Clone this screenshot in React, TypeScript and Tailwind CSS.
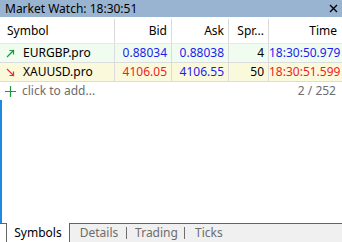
import React from "react";

// one quote row in the market watch table
type Quote = {
  symbol: string;
  up: boolean;
  bid: string;
  ask: string;
  spread: string;
  time: string;
};

const quotes: Quote[] = [
  { symbol: "EURGBP.pro", up: true, bid: "0.88034", ask: "0.88038", spread: "4", time: "18:30:50.979" },
  { symbol: "XAUUSD.pro", up: false, bid: "4106.05", ask: "4106.55", spread: "50", time: "18:30:51.599" },
];

const cols = "grid grid-cols-[115px_57px_57px_40px_1fr]";

function Arrow({ up }: { up: boolean }) {
  // little diagonal arrow in front of the symbol
  return up ? (
    <svg width="9" height="9" viewBox="0 0 9 9" className="shrink-0">
      <path d="M1 8 L8 1 M3.5 1.5 H7.5 V5.5" stroke="#1a9a3a" strokeWidth="1.2" fill="none" />
    </svg>
  ) : (
    <svg width="9" height="9" viewBox="0 0 9 9" className="shrink-0">
      <path d="M1 1 L8 8 M3.5 7.5 H7.5 V3.5" stroke="#e0303a" strokeWidth="1.2" fill="none" />
    </svg>
  );
}

export default function App() {
  return (
    <div
      className="w-[342px] h-[242px] bg-white flex flex-col text-[12px] text-black overflow-hidden"
      style={{ fontFamily: '"Noto Sans", "Open Sans", sans-serif' }}
    >
      {/* title bar */}
      <div className="h-[17px] bg-[#99b4d1] flex items-center justify-between pl-[5px] pr-[4px] leading-none">
        <span>Market Watch: 18:30:51</span>
        <svg width="9" height="9" viewBox="0 0 9 9">
          <path d="M1 1 L8 8 M8 1 L1 8" stroke="#000" strokeWidth="1.4" />
        </svg>
      </div>

      {/* header */}
      <div className={`${cols} h-[27px] border-b border-[#e8e8e8] pt-[2px]`}>
        <div className="flex items-center pl-[7px] border-r border-[#d9d9d9]">Symbol</div>
        <div className="flex items-center justify-end pr-[4px] border-r border-[#d9d9d9]">Bid</div>
        <div className="flex items-center justify-end pr-[4px] border-r border-[#d9d9d9]">Ask</div>
        <div className="flex items-center justify-end pr-[4px] border-r border-[#d9d9d9]">Spr...</div>
        <div className="flex items-center justify-end pr-[5px]">Time</div>
      </div>

      {/* quote rows */}
      {quotes.map((q) => {
        const bg = q.up ? "bg-[#effcef]" : "bg-[#fbf9dc]";
        const priceColor = q.up ? "text-[#1c1cf0]" : "text-[#f01c1c]";
        return (
          <div key={q.symbol} className={`${cols} h-[19px] ${bg} border-b border-[#dcdcdc]`}>
            <div className="flex items-center gap-[8px] pl-[6px] border-r border-[#dcdcdc]">
              <Arrow up={q.up} />
              <span>{q.symbol}</span>
            </div>
            <div className={`flex items-center justify-end pr-[4px] border-r border-[#dcdcdc] ${priceColor}`}>{q.bid}</div>
            <div className="flex items-center justify-end pr-[4px] border-r border-[#dcdcdc] text-[#1c1cf0]">{q.ask}</div>
            <div className="flex items-center justify-end pr-[4px] border-r border-[#dcdcdc]">{q.spread}</div>
            <div className={`flex items-center justify-end pr-[5px] ${priceColor}`}>{q.time}</div>
          </div>
        );
      })}

      {/* add row */}
      <div className="h-[18px] flex items-center justify-between pl-[5px] pr-[6px] text-[#6d6d6d]">
        <div className="flex items-center gap-[6px]">
          <svg width="11" height="11" viewBox="0 0 11 11">
            <path d="M5.5 0 V11 M0 5.5 H11" stroke="#1a9a3a" strokeWidth="1.2" />
          </svg>
          <span>click to add...</span>
        </div>
        <span>2 / 252</span>
      </div>

      {/* empty area with focus line */}
      <div className="flex-1 border-l-2 border-[#1e88e5]"></div>

      {/* tabs */}
      <div className="h-[19px] flex bg-[#f0f0f0] leading-none">
        <div className="w-[7px] bg-white border-t border-r border-[#646464]"></div>
        <div className="w-[63px] bg-white flex items-center justify-center border-r border-[#646464]">Symbols</div>
        <div className="flex-1 flex items-center border-t border-[#646464] text-[#6d6d6d]">
          <div className="w-[57px] flex justify-center pl-[2px] border-r border-[#6d6d6d]">Details</div>
          <div className="w-[58px] flex justify-center pl-[2px] border-r border-[#6d6d6d]">Trading</div>
          <div className="pl-[10px]">Ticks</div>
        </div>
      </div>
    </div>
  );
}
